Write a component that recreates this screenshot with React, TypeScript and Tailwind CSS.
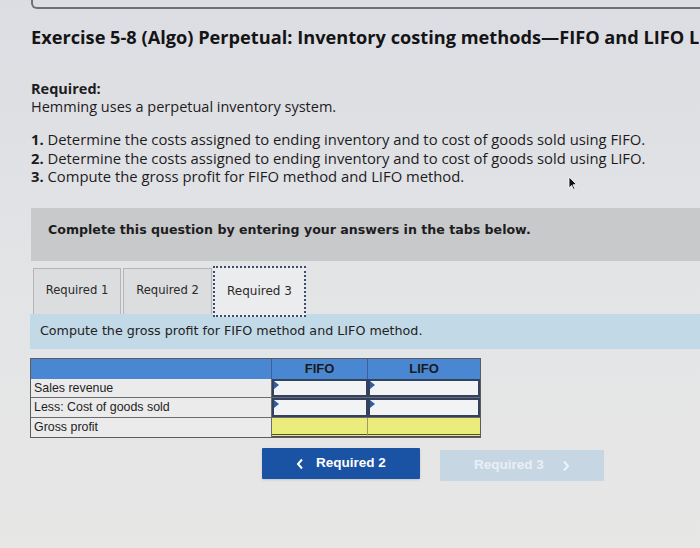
import React from "react";

const rows = [
  { label: "Sales revenue", input: true },
  { label: "Less: Cost of goods sold", input: true },
  { label: "Gross profit", input: false },
];

const Cell = ({ input, last }: { input: boolean; last?: boolean }) => {
  if (!input) {
    return (
      <div
        className={`h-full bg-[#ecec7c] border-b-[3px] border-double border-[#4b4b4b] ${
          last ? "" : "border-r border-r-[#9a9a6a]"
        }`}
      />
    );
  }
  return (
    <div className="relative h-full bg-[#f2f3f4] border-2 border-[#34415c]">
      <span className="absolute left-0 top-0 w-0 h-0 border-y-[4px] border-y-transparent border-l-[5px] border-l-[#2d5fa6]" />
    </div>
  );
};

export default function App() {
  return (
    <div
      className="relative w-[700px] h-[548px] overflow-hidden bg-gradient-to-b from-[#dcdde2] via-[#e3e4e6] to-[#e7e7e6] text-[#1c1c1e]"
      style={{ fontFamily: '"Open Sans", "Liberation Sans", sans-serif' }}
    >
      {/* mouse pointer */}
      <svg className="absolute left-[568px] top-[176px]" width="10" height="14" viewBox="0 0 10 14">
        <path d="M1 1 L1 12 L3.6 9.4 L5.6 13.5 L7 12.8 L5 8.8 L8.6 8.6 Z" fill="#111" stroke="#fff" strokeWidth="0.8" />
      </svg>

      <div className="pl-[31px]">
        <div className="h-[9px] border-b-2 border-l-2 border-[#6d6f74] rounded-bl-[6px]" />

        <h1 className="mt-[16px] text-[18.2px] leading-[24px] font-bold whitespace-nowrap text-[#141416]">
          Exercise 5-8 (Algo) Perpetual: Inventory costing methods—FIFO and LIFO LO P1
        </h1>

        <div className="mt-[31px] text-[14.5px] leading-[18px]">
          <div className="font-bold">Required:</div>
          <div>Hemming uses a perpetual inventory system.</div>
        </div>

        <ol className="mt-[14px] text-[14.8px] leading-[18.5px] whitespace-nowrap">
          <li>
            <b>1.</b> Determine the costs assigned to ending inventory and to cost of goods sold using FIFO.
          </li>
          <li>
            <b>2.</b> Determine the costs assigned to ending inventory and to cost of goods sold using LIFO.
          </li>
          <li>
            <b>3.</b> Compute the gross profit for FIFO method and LIFO method.
          </li>
        </ol>

        <div style={{ fontFamily: '"DejaVu Sans", Verdana, sans-serif' }}>
          <div className="mt-[22px] h-[53px] bg-[#c8c9cb] pl-[17px] pt-[14px] text-[12.6px] leading-[16px] font-bold text-[#1d1d1f]">
            Complete this question by entering your answers in the tabs below.
          </div>

          <div className="mt-[7px] h-[46px] flex items-start pl-[2px] text-[11.6px] text-[#2a2a2a]">
            <div className="w-[88px] h-[46px] flex items-center justify-center bg-[#dcdddf] border border-[#b4b5b8] border-b-0">
              Required 1
            </div>
            <div className="ml-[2px] w-[89px] h-[46px] flex items-center justify-center bg-[#dcdddf] border border-[#b4b5b8] border-b-0">
              Required 2
            </div>
            <div className="relative z-10 -mt-[2px] ml-[1px] w-[93px] h-[51px] flex items-center justify-center bg-[#ebeced] border-2 border-dotted border-[#3b4a6a] text-[12px]">
              Required 3
            </div>
          </div>

          <div className="-ml-[1px] h-[35px] bg-[#c2d9e7] pl-[10px] flex items-center text-[12.7px] text-[#222]">
            Compute the gross profit for FIFO method and LIFO method.
          </div>
        </div>

        <div
          className="mt-[9px] -ml-[1px] w-[451px] border border-[#5a5c60] text-[12.4px]"
          style={{ fontFamily: '"Liberation Sans", Arial, sans-serif' }}
        >
          <div className="grid grid-cols-[241px_96px_112px] h-[20px] bg-[#4a87d3] font-bold text-[13px] text-[#1a1a1a]">
            <div className="border-r border-[#3c5f95]" />
            <div className="flex items-center justify-center border-r border-[#3c5f95]">FIFO</div>
            <div className="flex items-center justify-center">LIFO</div>
          </div>
          {rows.map((r, i) => (
            <div
              key={r.label}
              className={`grid grid-cols-[241px_96px_112px] h-[19.5px] ${
                i < rows.length - 1 ? "border-b border-[#6a6c70]" : ""
              }`}
            >
              <div className="pl-[3px] flex items-center bg-[#ebebec] border-r border-[#6a6c70] text-[#1e1e1e]">
                {r.label}
              </div>
              <Cell input={r.input} />
              <Cell input={r.input} last />
            </div>
          ))}
        </div>

        <div
          className="mt-[10px] ml-[231px] flex items-start gap-[20px] text-[13.5px] font-bold"
          style={{ fontFamily: '"Liberation Sans", Arial, sans-serif' }}
        >
          <button className="w-[158px] h-[31px] bg-[#1a53a3] text-white flex items-center justify-center gap-[12px] rounded-[1px] shadow-sm">
            <svg width="8" height="12" viewBox="0 0 8 12">
              <path d="M6 1.5 L2 6 L6 10.5" fill="none" stroke="#fff" strokeWidth="2" />
            </svg>
            <span>Required 2</span>
          </button>
          <button className="mt-[2px] w-[164px] h-[31px] bg-[#c7d6e3] text-[#e9eff4] flex items-center justify-center gap-[18px] rounded-[1px]">
            <span>Required 3</span>
            <svg width="8" height="12" viewBox="0 0 8 12">
              <path d="M2 1.5 L6 6 L2 10.5" fill="none" stroke="#eef3f7" strokeWidth="2" />
            </svg>
          </button>
        </div>
      </div>
    </div>
  );
}
